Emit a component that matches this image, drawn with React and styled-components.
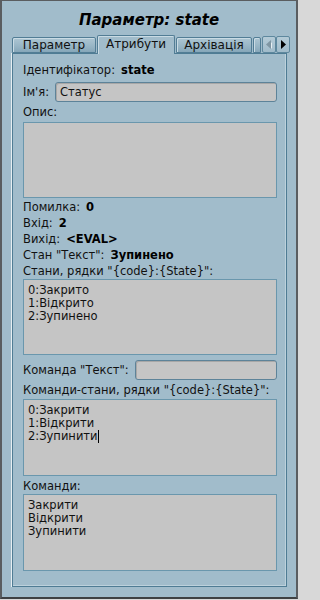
import styled, { createGlobalStyle } from 'styled-components'

const GlobalStyle = createGlobalStyle`
    html, body {
        margin: 0;
        padding: 0;
        background: #d8d8d8;
    }
    * {
        box-sizing: border-box;
    }
`

const Window = styled.div`
    width: 298px;
    height: 599px;
    background: #a1bccb;
    border-left: 2px solid #5a5d60;
    border-top: 1px solid #5a5d60;
    border-right: 2px solid #5a5d60;
    border-bottom: 2px solid #3e4143;
    display: flex;
    flex-direction: column;
    font-family: 'DejaVu Sans', 'Liberation Sans', sans-serif;
    font-size: 11.5px;
    color: #111;
`

const Title = styled.div`
    height: 34px;
    padding-top: 4px;
    line-height: 30px;
    text-align: center;
    font-size: 15px;
    font-weight: bold;
    font-style: italic;
    color: #000;
`

const TabBar = styled.div`
    display: flex;
    align-items: flex-end;
    height: 18px;
    margin-left: 10px;
`

const Tab = styled.div`
    position: relative;
    width: ${(props) => props.w}px;
    height: ${(props) => (props.active ? 19 : 16)}px;
    margin-bottom: ${(props) => (props.active ? -1 : 0)}px;
    margin-right: 1px;
    z-index: ${(props) => (props.active ? 1 : 0)};
    border: 1px solid #527d95;
    border-bottom: ${(props) => (props.active ? 'none' : '1px solid #527d95')};
    border-radius: 2px 2px 0 0;
    background: ${(props) =>
        props.active
            ? '#a1bccb'
            : 'linear-gradient(#adc6d3, #97b5c5 60%, #86a7b9)'};
    box-shadow: inset 1px 1px 0 #c9dbe4;
    text-align: center;
    line-height: ${(props) => (props.active ? 17 : 15)}px;
    font-size: 12px;
    white-space: nowrap;
    overflow: hidden;
    color: #111;
`

const ScrollButton = styled.div`
    width: 14px;
    height: 17px;
    border: 1px solid #5e889e;
    border-radius: 2px;
    background: linear-gradient(#b4cbd7, #a0bbca);
    display: flex;
    align-items: center;
    justify-content: center;
`

const Pane = styled.div`
    margin: 0 9px 9px 10px;
    border: 1px solid #4f7c94;
    box-shadow: -1px 0 0 #e6eef2, inset -1px -1px 0 #bcd1dc;
    padding: 8px 9px 15px 10px;
    display: flex;
    flex-direction: column;
`

const InfoRow = styled.div`
    display: flex;
    gap: 6px;
    height: 16px;
    line-height: 16px;
    margin-top: ${(props) => props.mt || 0}px;
    white-space: nowrap;
`

const Value = styled.span`
    font-weight: bold;
    color: #000;
`

const FieldRow = styled.div`
    display: flex;
    align-items: center;
    gap: 6px;
    height: 20px;
    margin-top: ${(props) => props.mt || 0}px;
    white-space: nowrap;
`

const LineInput = styled.div`
    flex: 1;
    height: 20px;
    background: #c5c5c5;
    border: 1px solid #5d8399;
    border-radius: 3px;
    box-shadow: inset 1px 1px 0 #a7a7a7;
    padding: 0 4px;
    line-height: 18px;
    color: #111;
`

const TextBox = styled.div`
    height: ${(props) => props.h}px;
    margin-top: ${(props) => props.mt || 0}px;
    background: #c5c5c5;
    border: 1px solid #6a97ad;
    padding: 4px 4px 0 4px;
    line-height: 13px;
    color: #111;
`

const Caret = styled.span`
    display: inline-block;
    width: 1px;
    height: 13px;
    background: #000;
    vertical-align: top;
`

const Arrow = ({ dir, color }) => (
    <svg width="6" height="9" viewBox="0 0 6 9">
        {dir === 'left' ? (
            <>
                <polygon points="6,0.5 1,4.5 6,8.5" fill="#e8eff3" transform="translate(1,1)" />
                <polygon points="5,0 0,4.5 5,9" fill={color} />
            </>
        ) : (
            <polygon points="1,0 6,4.5 1,9" fill={color} />
        )}
    </svg>
)

const App = () => {
    return (
        <Window>
            <GlobalStyle />
            <Title>Параметр: state</Title>
            <TabBar>
                <Tab w={84}>Параметр</Tab>
                <Tab w={78} active>
                    Атрибути
                </Tab>
                <Tab w={76}>Архівація</Tab>
                <Tab w={8} />
                <ScrollButton>
                    <Arrow dir="left" color="#7f96a3" />
                </ScrollButton>
                <ScrollButton>
                    <Arrow dir="right" color="#000" />
                </ScrollButton>
            </TabBar>
            <Pane>
                <InfoRow>
                    Ідентифікатор:<Value>state</Value>
                </InfoRow>
                <FieldRow mt={4}>
                    Ім'я:<LineInput>Статус</LineInput>
                </FieldRow>
                <InfoRow mt={2}>Опис:</InfoRow>
                <TextBox h={76} mt={2} />
                <InfoRow mt={1}>
                    Помилка:<Value>0</Value>
                </InfoRow>
                <InfoRow>
                    Вхід:<Value>2</Value>
                </InfoRow>
                <InfoRow>
                    Вихід:<Value>&lt;EVAL&gt;</Value>
                </InfoRow>
                <InfoRow>
                    Стан "Текст":<Value>Зупинено</Value>
                </InfoRow>
                <InfoRow>Стани, рядки "{'{code}'}:{'{State}'}":</InfoRow>
                <TextBox h={76}>
                    0:Закрито
                    <br />
                    1:Відкрито
                    <br />
                    2:Зупинено
                </TextBox>
                <FieldRow mt={5}>
                    Команда "Текст":<LineInput />
                </FieldRow>
                <InfoRow mt={2}>Команди-стани, рядки "{'{code}'}:{'{State}'}":</InfoRow>
                <TextBox h={77} mt={1}>
                    0:Закрити
                    <br />
                    1:Відкрити
                    <br />
                    2:Зупинити
                    <Caret />
                </TextBox>
                <InfoRow mt={2}>Команди:</InfoRow>
                <TextBox h={77}>
                    Закрити
                    <br />
                    Відкрити
                    <br />
                    Зупинити
                </TextBox>
            </Pane>
        </Window>
    )
}

export default App
